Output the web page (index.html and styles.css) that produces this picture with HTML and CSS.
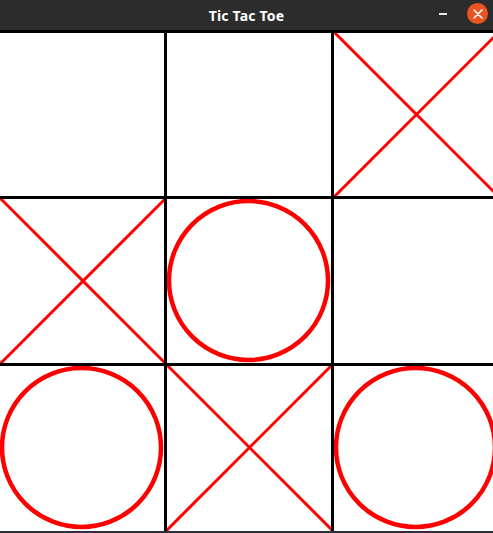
FILE: index.html
```html
<!DOCTYPE html>
<html lang="en">
<head>
    <meta charset="UTF-8">
    <meta name="viewport" content="width=device-width, initial-scale=1.0">
    <title>Tic Tac Toe</title>
    <link rel="stylesheet" href="styles.css">
</head>
<body>
    <div class="titlebar">
        <span class="title">Tic Tac Toe</span>
        <div class="controls">
            <span class="minimize"></span>
            <span class="close">
                <svg width="10" height="10" viewBox="0 0 10 10">
                    <path d="M1 1 L9 9 M9 1 L1 9" stroke="#fff" stroke-width="1.6" stroke-linecap="round"/>
                </svg>
            </span>
        </div>
    </div>

    <!-- board: 3x3 cells of 167px -->
    <svg class="board" width="493" height="501" viewBox="0 0 493 501">
        <rect x="0" y="0" width="493" height="501" fill="#fff"/>

        <!-- X marks -->
        <g stroke="#ff0000" stroke-width="3">
            <line x1="333" y1="1" x2="500" y2="168"/>
            <line x1="500" y1="1" x2="333" y2="168"/>

            <line x1="0" y1="168" x2="166" y2="334"/>
            <line x1="166" y1="168" x2="0" y2="334"/>

            <line x1="166" y1="334" x2="333" y2="501"/>
            <line x1="333" y1="334" x2="166" y2="501"/>
        </g>

        <!-- O marks -->
        <g stroke="#ff0000" stroke-width="4.5" fill="none">
            <circle cx="248.5" cy="250.5" r="79.5"/>
            <circle cx="81.5" cy="417.5" r="79.5"/>
            <circle cx="415.5" cy="417.5" r="79.5"/>
        </g>

        <!-- grid -->
        <g fill="#000">
            <rect x="0" y="0" width="493" height="3"/>
            <rect x="164" y="0" width="3" height="501"/>
            <rect x="331" y="0" width="3" height="501"/>
            <rect x="0" y="166" width="493" height="3"/>
            <rect x="0" y="333" width="493" height="3"/>
        </g>
    </svg>
</body>
</html>
```

FILE: styles.css
```css
body {
    margin: 0;
    padding: 0;
    background-color: #2d2f3a;
    font-family: "Noto Sans", "DejaVu Sans", sans-serif;
    overflow: hidden;
}

.titlebar {
    position: relative;
    display: flex;
    align-items: center;
    justify-content: center;
    height: 30px;
    background-color: #2c2c2c;
    color: #ffffff;
}

.title {
    font-size: 14px;
    font-weight: bold;
    letter-spacing: 0.2px;
}

.controls {
    position: absolute;
    right: 3px;
    top: 3px;
    display: flex;
    align-items: center;
    gap: 20px;
}

.minimize {
    display: block;
    width: 8px;
    height: 2px;
    background-color: #e6e6e6;
}

.close {
    display: flex;
    align-items: center;
    justify-content: center;
    width: 21px;
    height: 21px;
    margin-right: 2px;
    border-radius: 50%;
    background-color: #e95420;
}

.board {
    display: block;
}
```
